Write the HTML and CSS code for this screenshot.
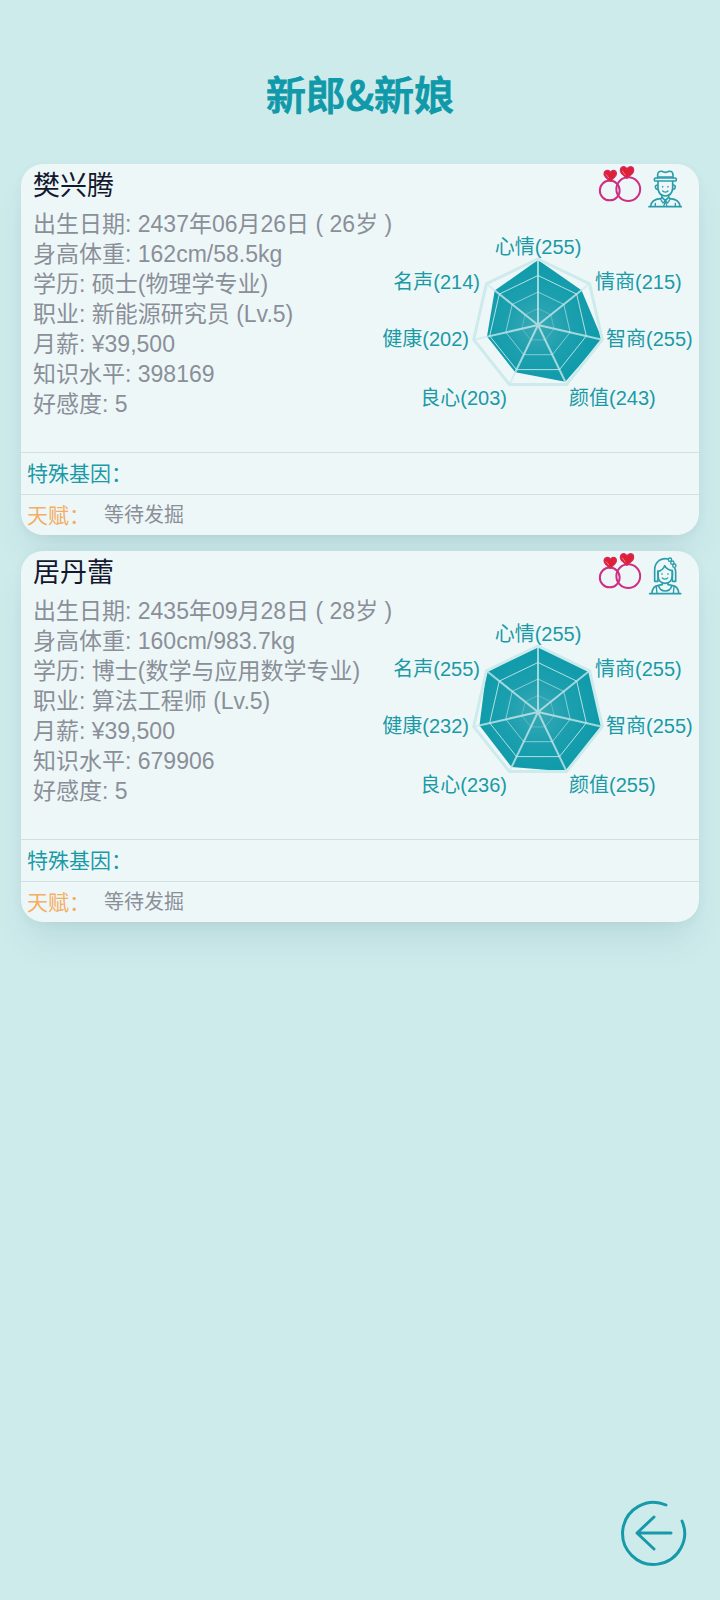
FILE: index.html
```html
<!DOCTYPE html>
<html lang="zh-CN">
<head>
    <meta charset="UTF-8">
    <meta name="viewport" content="width=device-width, initial-scale=1.0">
    <title>新郎&amp;新娘</title>
    <link rel="stylesheet" href="styles.css">
</head>
<body>
    <!-- 公用图形 -->
    <svg class="sprite" aria-hidden="true">
        <defs>
            <radialGradient id="fill" gradientUnits="userSpaceOnUse" cx="0" cy="0" r="66">
                <stop offset="0" stop-color="#3aa9b6"/>
                <stop offset="0.5" stop-color="#1b9fae"/>
                <stop offset="1" stop-color="#0d9aaa"/>
            </radialGradient>
        </defs>
        <symbol id="rings" viewBox="24 32 132 112">
            <g fill="none" stroke="#cf2f83" stroke-width="6">
                <circle cx="59" cy="106" r="30"/>
                <circle cx="115" cy="102" r="36"/>
            </g>
            <g fill="#e01f35" stroke="#d32a5c" stroke-width="4" stroke-linejoin="round">
                <path d="M60 78 L46 65 Q39 56 44 49 Q54 41 61 51 Q69 41 77 48 Q82 56 74 65 Z"/>
                <path d="M111 69 L95 55 Q88 45 94 37 Q105 30 111 41 Q119 30 129 37 Q134 46 127 55 Z"/>
            </g>
            <g fill="none" stroke="#f7a3a8" stroke-width="2" stroke-linecap="round">
                <path d="M48 58 L56 68"/>
                <path d="M97 47 L106 59"/>
            </g>
        </symbol>
        <symbol id="groom" viewBox="175 44 102 114">
            <g fill="none" stroke="#2a9dab" stroke-width="5" stroke-linecap="round" stroke-linejoin="round">
                <path d="M204 67 V58 Q205 46 217 48 Q227 54 238 48 Q249 46 250 58 V67"/>
                <path d="M206 65 H248" stroke-width="4"/>
                <rect x="194" y="68" width="66" height="9" rx="4"/>
                <path d="M205 79 V99 Q207 121 227 122 Q247 121 249 99 V79"/>
                <path d="M203 89 Q195 90 198 98 Q200 103 205 102 M251 89 Q259 90 256 98 Q254 103 249 102"/>
                <path d="M219 93 V95 M235 93 V95" stroke-width="4"/>
                <path d="M219 107 Q227 114 235 107" stroke-width="4"/>
                <path d="M217 121 V126 L227 136 L237 126 V121"/>
                <path d="M216 127 L213 132 L220 143 L227 136 L234 143 L241 132 L238 127" stroke-width="4"/>
                <path d="M212 130 Q185 132 183 153 M242 130 Q269 132 271 153"/>
                <path d="M197 144 V153 M257 144 V153 M227 137 L222 153 M227 137 L232 153" stroke-width="4"/>
                <path d="M178 154 H275"/>
            </g>
        </symbol>
        <symbol id="bride" viewBox="175 40 102 114">
            <g fill="none" stroke="#2a9dab" stroke-width="5" stroke-linecap="round" stroke-linejoin="round">
                <path d="M235 46 Q222 42 209 50 Q195 60 195 78 V113 H205 V84"/>
                <path d="M255 74 Q258 78 258 84 V113 H248 V84"/>
                <path d="M204 83 Q220 80 225 66 Q231 78 248 81"/>
                <path d="M205 84 V97 Q207 118 226 119 Q246 118 248 97 V84"/>
                <g stroke-width="4">
                    <circle cx="241" cy="48" r="5"/>
                    <circle cx="248" cy="57" r="5"/>
                    <circle cx="254" cy="66" r="5"/>
                    <path d="M217 90 V92 M235 90 V92"/>
                    <path d="M218 103 Q226 110 234 103"/>
                </g>
                <path d="M218 119 V123 Q209 124 207 126 Q210 142 227 142 Q243 142 246 126 Q243 124 235 123 V119"/>
                <path d="M207 125 Q188 127 187 149 M246 125 Q266 127 267 149"/>
                <path d="M200 130 L202 149 M253 130 L251 149" stroke-width="4"/>
                <path d="M180 150 H273"/>
            </g>
        </symbol>
        <symbol id="grid" viewBox="-70 -70 140 140">
            <g fill="none" stroke="#cdebec">
                <path stroke-width="3" d="M0 -66 L51.6 -41.2 L64.3 14.7 L28.6 59.5 L-28.6 59.5 L-64.3 14.7 L-51.6 -41.2 Z"/>
                <path opacity="0.85" d="M0 -49.5 L38.7 -30.9 L48.3 11 L21.5 44.6 L-21.5 44.6 L-48.3 11 L-38.7 -30.9 Z"/>
                <path opacity="0.6" d="M0 -33 L25.8 -20.6 L32.2 7.3 L14.3 29.7 L-14.3 29.7 L-32.2 7.3 L-25.8 -20.6 Z"/>
                <path opacity="0.3" d="M0 -16.5 L12.9 -10.3 L16.1 3.7 L7.2 14.9 L-7.2 14.9 L-16.1 3.7 L-12.9 -10.3 Z"/>
                <path opacity="0.75" stroke-width="2" d="M0 0 V-66 M0 0 L51.6 -41.2 M0 0 L64.3 14.7 M0 0 L28.6 59.5 M0 0 L-28.6 59.5 M0 0 L-64.3 14.7 M0 0 L-51.6 -41.2"/>
            </g>
        </symbol>
    </svg>

    <main class="page">
        <h1 class="title">新郎&amp;新娘</h1>

        <!-- 新郎 -->
        <section class="card">
            <div class="card-head">
                <h2 class="name">樊兴腾</h2>
                <svg class="icon-rings" aria-hidden="true"><use href="#rings"/></svg>
                <svg class="icon-person" aria-hidden="true"><use href="#groom"/></svg>
            </div>
            <div class="card-body">
                <ul class="info">
                    <li>出生日期: 2437年06月26日 ( 26岁 )</li>
                    <li>身高体重: 162cm/58.5kg</li>
                    <li>学历: 硕士(物理学专业)</li>
                    <li>职业: 新能源研究员 (Lv.5)</li>
                    <li>月薪: ¥39,500</li>
                    <li>知识水平: 398169</li>
                    <li>好感度: 5</li>
                </ul>
                <svg class="radar" viewBox="-160 -96 320 192">
                    <path fill="url(#fill)" d="M0 -65 L43.5 -34.7 L64.3 14.7 L27.3 56.7 L-22.8 47.3 L-51 11.6 L-43.3 -34.5 Z"/>
                    <use href="#grid" x="-70" y="-70" width="140" height="140"/>
                    <text class="mid" x="0" y="-71">心情(255)</text>
                    <text x="57" y="-36">情商(215)</text>
                    <text x="68" y="21">智商(255)</text>
                    <text x="31" y="80">颜值(243)</text>
                    <text class="end" x="-31" y="80">良心(203)</text>
                    <text class="end" x="-69" y="21">健康(202)</text>
                    <text class="end" x="-58" y="-36">名声(214)</text>
                </svg>
            </div>
            <div class="row gene">特殊基因：</div>
            <div class="row talent">天赋：<span class="talent-value">等待发掘</span></div>
        </section>

        <!-- 新娘 -->
        <section class="card">
            <div class="card-head">
                <h2 class="name">居丹蕾</h2>
                <svg class="icon-rings" aria-hidden="true"><use href="#rings"/></svg>
                <svg class="icon-person" aria-hidden="true"><use href="#bride"/></svg>
            </div>
            <div class="card-body">
                <ul class="info">
                    <li>出生日期: 2435年09月28日 ( 28岁 )</li>
                    <li>身高体重: 160cm/983.7kg</li>
                    <li>学历: 博士(数学与应用数学专业)</li>
                    <li>职业: 算法工程师 (Lv.5)</li>
                    <li>月薪: ¥39,500</li>
                    <li>知识水平: 679906</li>
                    <li>好感度: 5</li>
                </ul>
                <svg class="radar" viewBox="-160 -96 320 192">
                    <path fill="url(#fill)" d="M0 -65 L51.6 -41.2 L64.3 14.7 L28.6 59.5 L-26.5 55 L-58.5 13.4 L-51.6 -41.2 Z"/>
                    <use href="#grid" x="-70" y="-70" width="140" height="140"/>
                    <text class="mid" x="0" y="-71">心情(255)</text>
                    <text x="57" y="-36">情商(255)</text>
                    <text x="68" y="21">智商(255)</text>
                    <text x="31" y="80">颜值(255)</text>
                    <text class="end" x="-31" y="80">良心(236)</text>
                    <text class="end" x="-69" y="21">健康(232)</text>
                    <text class="end" x="-58" y="-36">名声(255)</text>
                </svg>
            </div>
            <div class="row gene">特殊基因：</div>
            <div class="row talent">天赋：<span class="talent-value">等待发掘</span></div>
        </section>

        <button class="back" type="button" aria-label="返回">
            <svg viewBox="0 0 66 66" width="66" height="66" fill="none" stroke="#1699a8" stroke-width="3" stroke-linecap="round" stroke-linejoin="round">
                <path d="M45 5 A31 31 0 1 0 61 21"/>
                <path d="M50 33 H16 M33 17 L16 33 L33 49"/>
            </svg>
        </button>
    </main>
</body>
</html>
```
FILE: styles.css
```css
* {
    box-sizing: border-box;
}
body {
    margin: 0;
    background-color: #ceebec;
    font-family: "Liberation Sans", "Noto Sans CJK SC", sans-serif;
    color: #8a8f98;
}
.sprite {
    position: absolute;
    width: 0;
    height: 0;
}
.page {
    display: flex;
    flex-direction: column;
    gap: 16px;
    min-height: 100vh;
    padding: 63px 21px 34px;
}
.title {
    margin: 0 0 25px;
    font-family: "Noto Sans CJK SC", sans-serif;
    font-size: 40px;
    font-weight: 500;
    line-height: 60px;
    text-align: center;
    color: #1099a9;
    -webkit-text-stroke: 1px #1099a9;
}

/* 卡片 */
.card {
    border-radius: 22px;
    background-color: #eef7f8;
    box-shadow: 0 24px 36px -8px rgba(0, 70, 75, 0.1), 0 2px 10px rgba(0, 70, 75, 0.05);
}
.card-head {
    display: flex;
    align-items: flex-start;
    height: 45px;
    padding: 2px 17px 0 12px;
}
.name {
    flex: 1;
    margin: 0;
    font-size: 27px;
    font-weight: 400;
    line-height: 40px;
    color: #14182e;
}
.icon-rings {
    width: 44px;
    height: 37px;
}
.icon-person {
    width: 34px;
    height: 38px;
    margin: 4px 0 0 6px;
}
.card-body {
    display: flex;
    height: 243px;
}
.info {
    flex: 1;
    min-width: 0;
    margin: 0;
    padding: 0 0 0 12px;
    list-style: none;
    font-size: 23px;
    line-height: 30px;
    white-space: nowrap;
}
.radar {
    width: 320px;
    height: 192px;
    margin: 20px 1px 0 0;
}
.radar text {
    font-size: 20px;
    fill: #1b9aa6;
}
.radar .mid {
    text-anchor: middle;
}
.radar .end {
    text-anchor: end;
}
.row {
    height: 42px;
    padding-left: 6px;
    border-top: 1px solid #cfdfe2;
    font-size: 21px;
    line-height: 41px;
}
.gene {
    color: #1b9aa6;
}
.talent {
    display: flex;
    height: 41px;
    color: #f4ad62;
}
.talent-value {
    margin-left: 14px;
    font-size: 20px;
    color: #8a8f98;
}

/* 返回按钮 */
.back {
    align-self: flex-end;
    margin: auto 12px 0 0;
    padding: 0;
    border: none;
    background: none;
    cursor: pointer;
}
.back svg {
    display: block;
}
```
